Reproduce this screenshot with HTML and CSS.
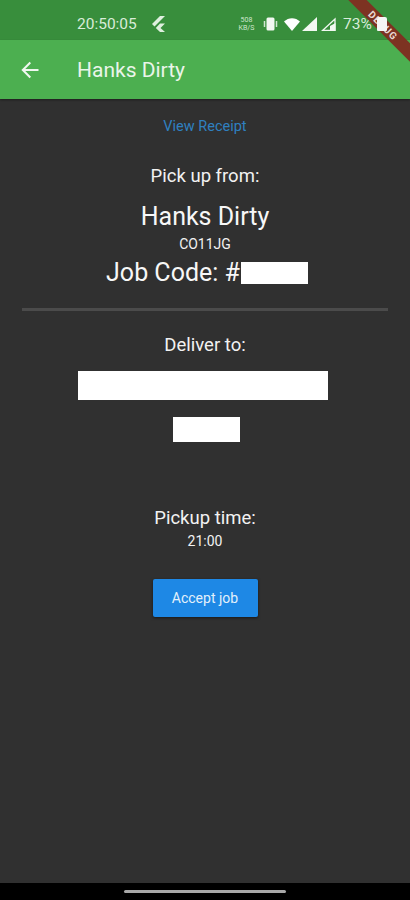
FILE: index.html
```html
<!DOCTYPE html>
<html>
<head>
    <title>Hanks Dirty</title>
    <link rel="stylesheet" href="styles.css">
</head>
<body>
    <div class="phone">
        <div class="status-bar">
            <span class="clock">20:50:05</span>
            <svg class="flutter-icon" width="14" height="16" viewBox="0 0 14 16">
                <path d="M8 0h5L5 8 2.500 10.500 0 8z" fill="#dff0df"/>
                <path d="M8 7.500h5L8.500 12l4.500 4H8L3.800 12z" fill="#dff0df"/>
            </svg>
            <span class="net-speed">508<br>KB/S</span>
            <svg class="vibrate-icon" width="15" height="14" viewBox="0 0 15 14">
                <rect x="3.500" y="0.500" width="8" height="13" rx="1.500" fill="#f2f8f2"/>
                <path d="M1.500 4v6M13.500 4v6" stroke="#cfe6cf" stroke-width="1.500"/>
            </svg>
            <svg class="wifi-icon" width="16" height="13" viewBox="0 0 16 13">
                <path d="M0 3.500C4.500-1 11.500-1 16 3.500L8 13z" fill="#fff"/>
            </svg>
            <svg class="signal-icon" width="15" height="14" viewBox="0 0 15 14">
                <path d="M15 0v14H0z" fill="#f2f8f2"/>
            </svg>
            <svg class="signal-icon" width="15" height="14" viewBox="0 0 15 14">
                <path d="M14 2v11.500H1.500z" fill="none" stroke="#f2f8f2" stroke-width="1.300"/>
                <path d="M14.500 6v8H9V9z" fill="#f2f8f2"/>
            </svg>
            <span class="battery-text">73%</span>
            <div class="battery"></div>
        </div>
        <div class="app-bar">
            <svg class="back-icon" width="18" height="18" viewBox="0 0 18 18">
                <path d="M17.500 9H2M9.300 1.500 1.800 9l7.500 7.500" fill="none" stroke="#f1f8f1" stroke-width="2"/>
            </svg>
            <span class="app-title">Hanks Dirty</span>
        </div>
        <div class="debug-banner"><span>DEBUG</span></div>

        <div class="content">
            <a class="receipt-link">View Receipt</a>
            <p class="label pickup-label">Pick up from:</p>
            <p class="big shop-name">Hanks Dirty</p>
            <p class="small postcode">CO11JG</p>
            <p class="big job-code">Job Code: #<span class="redact redact-code"></span></p>
            <div class="divider"></div>
            <p class="label deliver-label">Deliver to:</p>
            <div class="redact redact-name"></div>
            <div class="redact redact-postcode"></div>
            <p class="label time-label">Pickup time:</p>
            <p class="small time-value">21:00</p>
            <button class="accept-btn">Accept job</button>
        </div>

        <div class="nav-bar">
            <div class="home-handle"></div>
        </div>
    </div>
</body>
</html>
```

FILE: styles.css
```css
html, body {
    margin: 0;
    padding: 0;
    background-color: #000;
}

body {
    font-family: Roboto, 'Liberation Sans', sans-serif;
    color: #f2f2f2;
}

p {
    margin: 0;
}

.phone {
    width: 410px;
    height: 900px;
    position: relative;
    overflow: hidden;
    display: flex;
    flex-direction: column;
    background-color: #303030;
}

/* status bar */
.status-bar {
    height: 40px;
    flex-shrink: 0;
    display: flex;
    align-items: center;
    padding: 8px 0 0 77px;
    box-sizing: border-box;
    background-color: #388e3c;
    color: #d9ecd9;
}

.clock {
    font-size: 15.500px;
    width: 75px;
}

.net-speed {
    margin-left: 71px;
    width: 19px;
    font-size: 7px;
    line-height: 8px;
    text-align: center;
    color: #cfe6cf;
}

.vibrate-icon {
    margin-left: 7px;
}

.wifi-icon {
    margin-left: 6px;
}

.signal-icon {
    margin-left: 2px;
}

.signal-icon + .signal-icon {
    margin-left: 4px;
}

.battery-text {
    margin-left: 7px;
    font-size: 15.500px;
}

/* sits on top of the debug ribbon */
.battery {
    position: relative;
    z-index: 1;
    width: 10px;
    height: 14px;
    margin-left: 5px;
    background-color: #f6f6f6;
    border-radius: 2px 2px 1px 1px;
}

/* app bar */
.app-bar {
    height: 59px;
    flex-shrink: 0;
    display: flex;
    align-items: center;
    padding-left: 21px;
    box-sizing: border-box;
    background-color: #4caf50;
    box-shadow: 0 1px 2px rgba(0, 0, 0, 0.4);
    position: relative;
}

.app-title {
    margin-left: 38px;
    font-size: 21px;
    color: #eaf5ea;
}

.debug-banner {
    position: absolute;
    top: 19px;
    left: 335px;
    width: 96px;
    height: 13px;
    line-height: 13px;
    text-align: center;
    transform: rotate(45deg);
    background-color: #7d3322;
    font-size: 10px;
    font-weight: 700;
    letter-spacing: 1px;
    color: #e9d9d5;
}

/* main content */
.content {
    flex: 1;
    display: flex;
    flex-direction: column;
    align-items: center;
}

.receipt-link {
    margin-top: 19px;
    font-size: 14.500px;
    line-height: 17px;
    color: #2f80c0;
}

.label {
    font-size: 18.500px;
    line-height: 22px;
}

.big {
    font-size: 25px;
    line-height: 28px;
    color: #f7f7f7;
}

.small {
    font-size: 14px;
    line-height: 16px;
}

.pickup-label {
    margin-top: 30px;
}

.shop-name {
    margin-top: 16px;
}

.postcode {
    margin-top: 5px;
}

.job-code {
    margin-top: 7px;
    margin-left: 4px;
    display: flex;
    align-items: center;
}

.redact {
    background-color: #fff;
}

.redact-code {
    display: block;
    width: 67px;
    height: 22px;
    margin-left: 1px;
}

.divider {
    width: 366px;
    height: 3px;
    margin-top: 21px;
    background-color: #4b4b4b;
}

.deliver-label {
    margin-top: 23px;
}

.redact-name {
    width: 250px;
    height: 29px;
    margin-top: 15px;
    margin-left: -4px;
}

.redact-postcode {
    width: 67px;
    height: 25px;
    margin-top: 17px;
    margin-left: 2px;
}

.time-label {
    margin-top: 65px;
}

.time-value {
    margin-top: 4px;
}

.accept-btn {
    width: 105px;
    height: 38px;
    margin-top: 30px;
    padding: 0;
    border: none;
    border-radius: 2px;
    background-color: #1e88e5;
    color: #e3f0fb;
    font-family: Roboto, 'Liberation Sans', sans-serif;
    font-size: 14px;
    box-shadow: 0 1px 3px rgba(0, 0, 0, 0.5);
}

/* android nav bar */
.nav-bar {
    height: 17px;
    flex-shrink: 0;
    background-color: #000;
    display: flex;
    justify-content: center;
    padding-top: 7px;
    box-sizing: border-box;
}

.home-handle {
    width: 162px;
    height: 3px;
    border-radius: 2px;
    background-color: #a8a8a8;
}
```
